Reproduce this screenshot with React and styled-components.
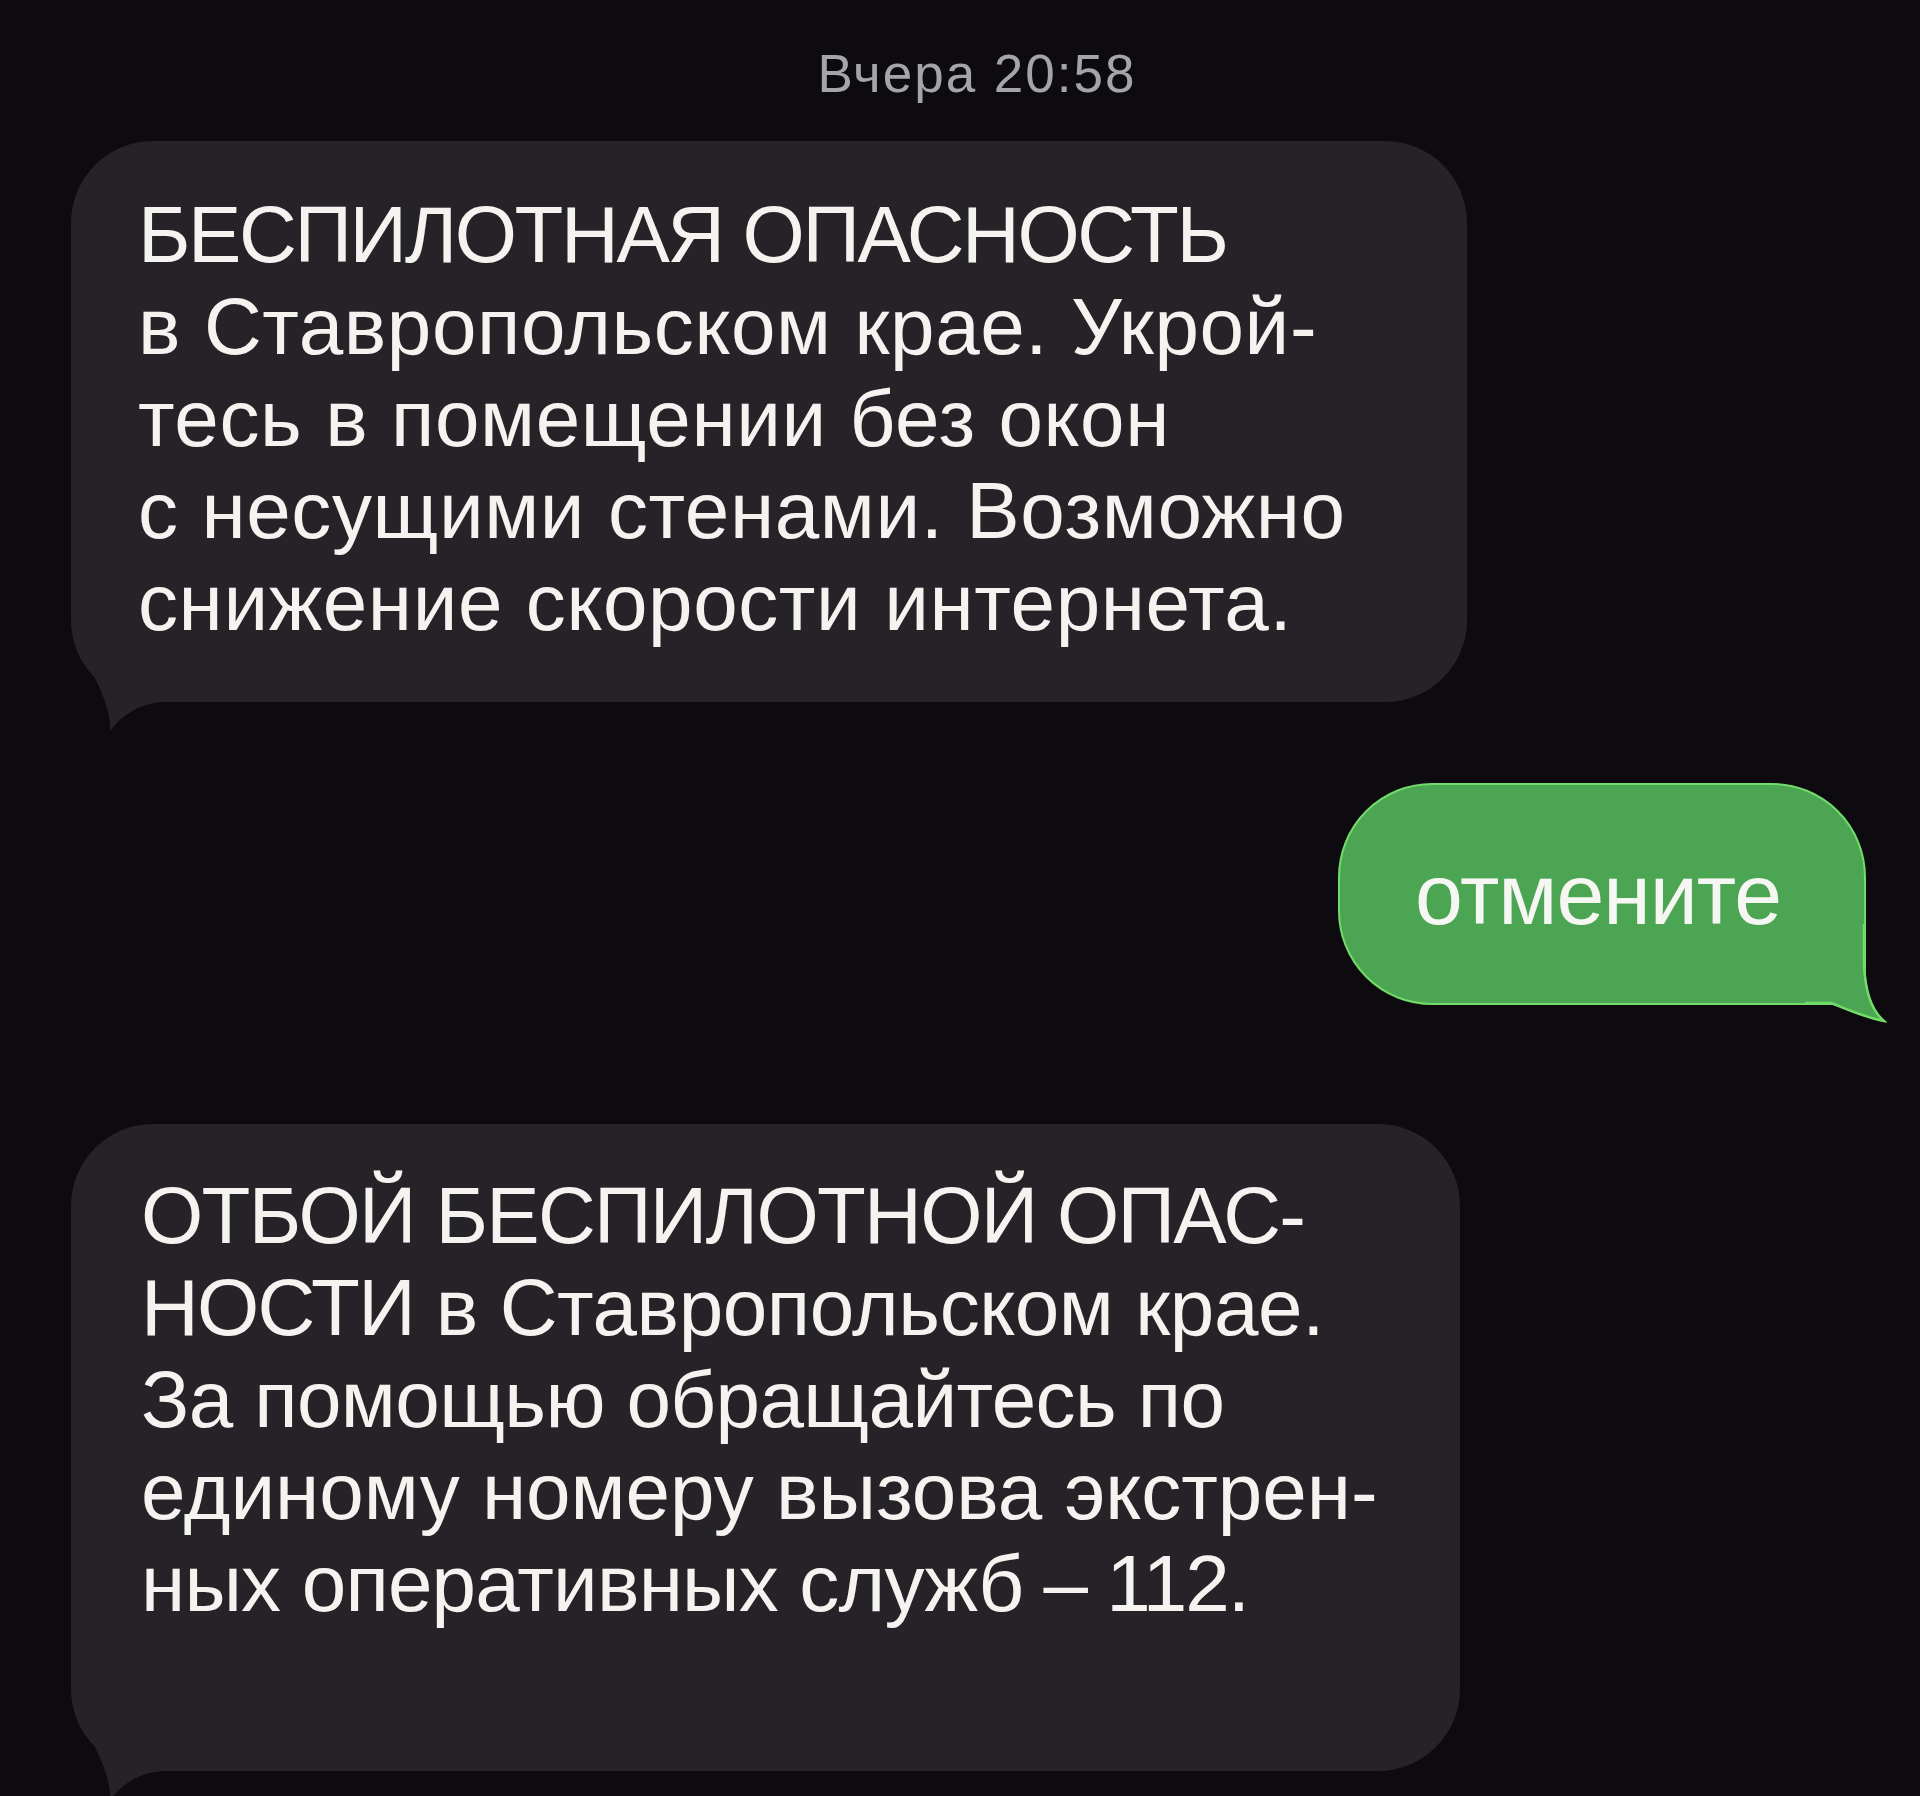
import React from "react";
import styled, { createGlobalStyle } from "styled-components";

const GlobalStyle = createGlobalStyle`
  html, body {
    margin: 0;
    padding: 0;
    background: #0d0b0f;
  }
`;

const INCOMING = "#252228";
const OUTGOING = "#4ba553";
const OUTGOING_RIM = "#72dc68";

// each line is a list of chunks; caps chunks get tighter tracking,
// a chunk may also carry its own tracking value
const messages = [
  {
    id: 1,
    incoming: true,
    width: 1396,
    tracking: { lower: 0.6, caps: -2.4 },
    lines: [
      [{ caps: true, text: "БЕСПИЛОТНАЯ ОПАСНОСТЬ" }],
      [{ text: "в Ставропольском крае. Укрой-" }],
      [{ text: "тесь в помещении без окон" }],
      [{ text: "с несущими стенами. Возможно" }],
      [{ text: "снижение скорости интернета." }],
    ],
  },
  { id: 2, incoming: false, text: "отмените" },
  {
    id: 3,
    incoming: true,
    width: 1389,
    tall: true,
    tracking: { lower: 0, caps: -1.7 },
    lines: [
      [{ caps: true, text: "ОТБОЙ БЕСПИЛОТНОЙ ОПАС-" }],
      [{ caps: true, text: "НОСТИ" }, { text: " в Ставропольском крае.", tracking: -0.4 }],
      [{ text: "За помощью обращайтесь по", tracking: -0.6 }],
      [{ text: "единому номеру вызова экстрен-" }],
      [
        { text: "ных оперативных служб", tracking: -0.8 },
        { text: " – 112.", tracking: -2 },
      ],
    ],
  },
];

function IncomingTail() {
  return (
    <LeftTail viewBox="0 0 92 130" width="92" height="130">
      <path
        d="M20,68 C31,90 40,110 39,129 C52,112 68,102 92,100 L92,56 Z"
        fill={INCOMING}
      />
    </LeftTail>
  );
}

function OutgoingTail() {
  return (
    <RightTail viewBox="0 0 82 100" width="82" height="100">
      <path
        d="M0,0 L60,0 L60,40 C61,66 67,86 80,98 C62,95 44,87 26,80 L0,80 Z"
        fill={OUTGOING}
      />
      <path
        d="M59,0 L59,40 C60,66 66,86 79,97 C62,94 44,86 26,79 L0,79"
        fill="none"
        stroke={OUTGOING_RIM}
        strokeWidth="2.5"
      />
    </RightTail>
  );
}

function Message({ msg }) {
  if (msg.incoming) {
    const { lower, caps } = msg.tracking;
    return (
      <IncomingBubble $width={msg.width} $tall={msg.tall}>
        <BubbleText $tracking={lower}>
          {msg.lines.map((chunks, i) => (
            <Line key={i}>
              {chunks.map((c, j) => (
                <Chunk
                  key={j}
                  $tracking={c.tracking ?? (c.caps ? caps : lower)}
                >
                  {c.text}
                </Chunk>
              ))}
            </Line>
          ))}
        </BubbleText>
        <IncomingTail />
      </IncomingBubble>
    );
  }
  return (
    <OutgoingBubble>
      <OutgoingText>{msg.text}</OutgoingText>
      <OutgoingTail />
    </OutgoingBubble>
  );
}

export default function App() {
  return (
    <>
      <GlobalStyle />
      <Screen>
        <Stamp>Вчера 20:58</Stamp>
        <Thread>
          {messages.map((m) => (
            <Message key={m.id} msg={m} />
          ))}
        </Thread>
      </Screen>
    </>
  );
}

const Screen = styled.div`
  width: 1920px;
  height: 1796px;
  overflow: hidden;
  background: #0d0b0f;
  display: flex;
  flex-direction: column;
  padding: 44px 54px 0 71px;
  box-sizing: border-box;
  font-family: "Liberation Sans", Arial, sans-serif;
`;

const Stamp = styled.div`
  align-self: center;
  margin-left: 17px;
  font-size: 53px;
  line-height: 60px;
  letter-spacing: 2px;
  color: #a5a4a9;
`;

const Thread = styled.div`
  display: flex;
  flex-direction: column;
  margin-top: 37px;
`;

const IncomingBubble = styled.div`
  position: relative;
  align-self: flex-start;
  width: ${(p) => p.$width}px;
  box-sizing: border-box;
  padding: ${(p) => (p.$tall ? "46px 0 141px 70px" : "48px 0 53px 67px")};
  background: ${INCOMING};
  border-radius: 82px;
  & + & {
    margin-top: 119px;
  }
`;

const BubbleText = styled.div`
  position: relative;
  z-index: 1;
  font-size: 80px;
  line-height: 92px;
  letter-spacing: ${(p) => p.$tracking}px;
  color: #f4f3f0;
`;

const Line = styled.div`
  white-space: nowrap;
`;

const Chunk = styled.span`
  letter-spacing: ${(p) => p.$tracking}px;
`;

const LeftTail = styled.svg`
  position: absolute;
  left: 0;
  bottom: -30px;
  display: block;
`;

const OutgoingBubble = styled.div`
  position: relative;
  align-self: flex-end;
  width: 528px;
  height: 222px;
  box-sizing: border-box;
  margin: 81px 0 119px;
  display: flex;
  align-items: center;
  justify-content: center;
  background: ${OUTGOING};
  border: 2.5px solid ${OUTGOING_RIM};
  border-radius: 94px 94px 0 94px;
`;

const OutgoingText = styled.span`
  position: relative;
  z-index: 1;
  margin-left: -8px;
  font-size: 86px;
  letter-spacing: -1px;
  color: #f6f7f2;
`;

const RightTail = styled.svg`
  position: absolute;
  right: -22.5px;
  bottom: -20.5px;
  display: block;
`;
